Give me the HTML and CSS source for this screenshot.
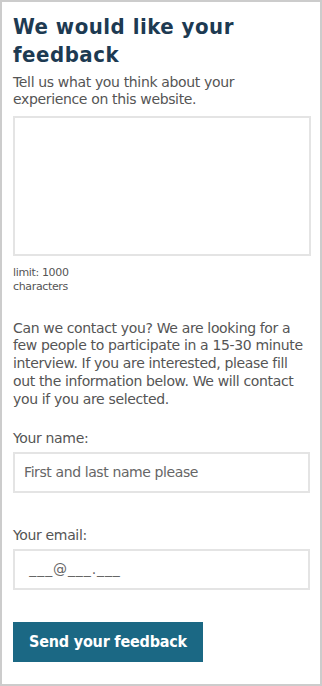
FILE: index.html
```html
<!DOCTYPE html>
<html lang="en">
<head>
<meta charset="utf-8">
<title>Feedback</title>
<link rel="stylesheet" href="styles.css">
</head>
<body>
<form class="panel">
  <h1 class="title">We would like your feedback</h1>
  <p class="intro">Tell us what you think about your experience on this website.</p>
  <textarea class="comment" aria-label="Your feedback"></textarea>
  <p class="limit">limit: 1000 characters</p>
  <p class="contact">Can we contact you? We are looking for a few people to participate in a 15-30 minute interview. If you are interested, please fill out the information below. We will contact you if you are selected.</p>
  <label class="field field-name">
    <span class="field-label">Your name:</span>
    <input class="field-input" type="text" placeholder="First and last name please">
  </label>
  <label class="field field-email">
    <span class="field-label">Your email:</span>
    <input class="field-input field-input-email" type="text" placeholder=" ___@___.___">
  </label>
  <button class="send" type="button">Send your feedback</button>
</form>
</body>
</html>
```
FILE: styles.css
```css
* { box-sizing: border-box; }
html, body { margin: 0; padding: 0; background: #fff; }
body {
  font-family: "DejaVu Sans", "Liberation Sans", sans-serif;
  color: #555;
}
.panel {
  width: 322px;
  height: 686px;
  border: 2px solid #cccccc;
  padding: 11px 11px 0 11px;
  display: flex;
  flex-direction: column;
  align-items: flex-start;
}
.title {
  margin: 0;
  font-family: "DejaVu Sans Condensed", "DejaVu Sans", sans-serif;
  font-stretch: condensed;
  font-size: 22px;
  line-height: 28px;
  letter-spacing: 0.5px;
  font-weight: bold;
  color: #1d3a52;
}
.intro {
  margin: 5px 0 0;
  font-size: 14px;
  line-height: 17px;
  letter-spacing: -0.35px;
}
.comment {
  margin: 8px 0 0;
  width: 298px;
  height: 140px;
  border: 2px solid #e4e4e4;
  resize: none;
  font: inherit;
  background: #fff;
}
.limit {
  margin: 10px 0 0;
  width: 70px;
  font-size: 11px;
  line-height: 14px;
  letter-spacing: -0.35px;
}
.contact {
  margin: 25.5px 0 0;
  font-size: 14px;
  line-height: 17.85px;
  letter-spacing: -0.35px;
}
.field {
  display: flex;
  flex-direction: column;
  align-items: flex-start;
}
.field-name { margin-top: 20.25px; }
.field-email { margin-top: 33px; }
.field-label {
  font-size: 14px;
  line-height: 18px;
  letter-spacing: -0.35px;
}
.field-input {
  margin-top: 5px;
  width: 297px;
  height: 41px;
  border: 2px solid #e4e4e4;
  padding: 0 9px;
  font-family: inherit;
  font-size: 14px;
  letter-spacing: -0.4px;
  color: #555;
  background: #fff;
}
.field-input-email { letter-spacing: 0.9px; }
.field-input::placeholder { color: #666; opacity: 1; }
.send {
  margin-top: 32px;
  width: 190px;
  height: 40px;
  border: 0;
  background: #1b6884;
  color: #fff;
  font-family: "DejaVu Sans Condensed", "DejaVu Sans", sans-serif;
  font-stretch: condensed;
  font-weight: bold;
  font-size: 16px;
  letter-spacing: -0.2px;
  padding: 0;
}
```
